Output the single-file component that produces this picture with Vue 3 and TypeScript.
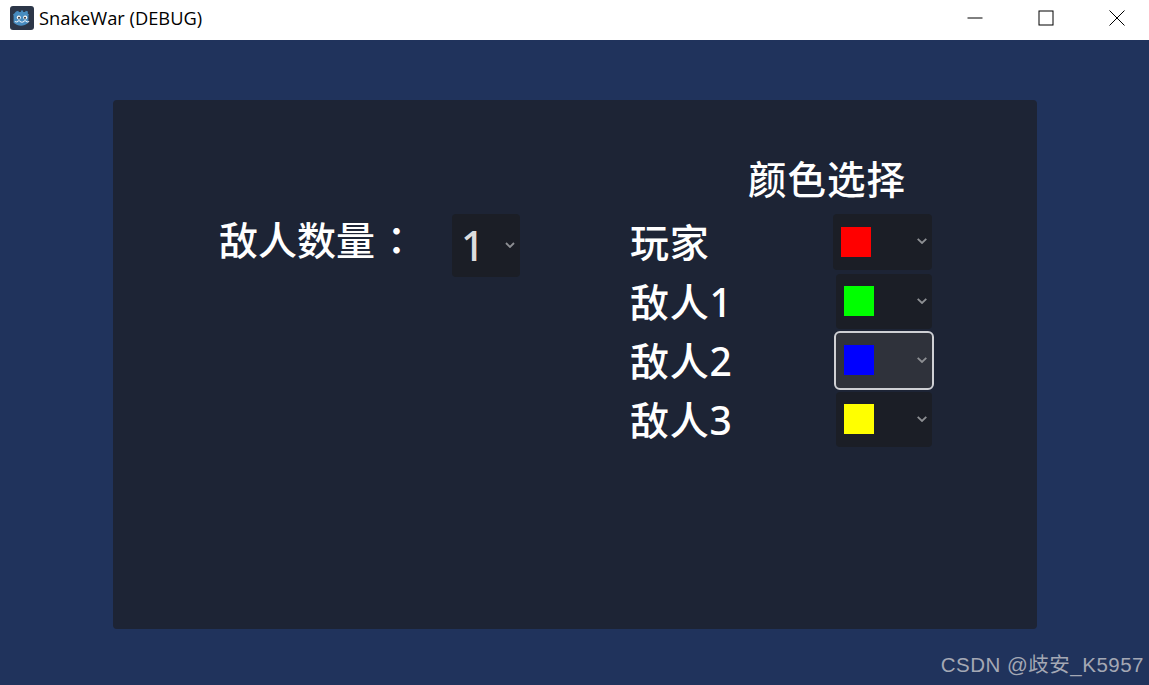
<script setup lang="ts">
interface Row { name: string; color: string; wide?: boolean; focus?: boolean }
const rows: Row[] = [
  { name: '玩家', color: '#ff0000', wide: true },
  { name: '敌人1', color: '#00ff00' },
  { name: '敌人2', color: '#0000ff', focus: true },
  { name: '敌人3', color: '#ffff00' },
]
</script>

<template>
  <div class="window">
    <header class="titlebar">
      <div class="title-left">
        <svg class="app-icon" viewBox="0 0 24 24">
          <rect width="24" height="24" rx="3" fill="#2c3648" />
          <path d="M6 5.500l2.200-.8.700 1.400c.7-.2 1.300-.2 2-.2V4.400h2.200V5.900c.7 0 1.300 0 2 .2l.7-1.400 2.200.8-.3 1.900 1.300 1.200-.6 1v7.200c-2.300 2.100-5 2.900-7.400 2.900s-5.100-.8-7.400-2.900V9.600l-.6-1 1.300-1.200z" fill="#478cbf" />
          <path d="M4.800 15.500l2.400.6.600-1.200h2.300l.6 1.200h2.600l.6-1.200h2.300l.6 1.200 2.400-.6" fill="none" stroke="#e6eef5" stroke-width="1" />
          <circle cx="8.800" cy="11.600" r="2" fill="#fff" />
          <circle cx="15.200" cy="11.600" r="2" fill="#fff" />
          <circle cx="9" cy="11.800" r="1.100" fill="#414042" />
          <circle cx="15" cy="11.800" r="1.100" fill="#414042" />
        </svg>
        <span class="title-text">SnakeWar (DEBUG)</span>
      </div>
      <div class="controls">
        <svg class="ctl" viewBox="0 0 16 16"><path d="M0.500 8H15.500" /></svg>
        <svg class="ctl" viewBox="0 0 16 16"><rect x="1" y="1" width="14" height="14" /></svg>
        <svg class="ctl" viewBox="0 0 16 16"><path d="M0.500 0.500L15.500 15.500M15.500 0.500L0.500 15.500" /></svg>
      </div>
    </header>

    <main class="stage">
      <section class="panel">
        <div class="count">
          <span class="label count-label">敌人数量<span class="colon">：</span></span>
          <div class="select count-select">
            <span class="count-value">1</span>
            <svg class="chev" viewBox="0 0 10 6"><path d="M1 1l4 4 4-4" /></svg>
          </div>
        </div>

        <div class="colors">
          <h2 class="colors-title">颜色选择</h2>
          <div class="rows">
            <div v-for="r in rows" :key="r.name" class="row">
              <span class="label row-label">{{ r.name }}</span>
              <div class="select color-select" :class="{ wide: r.wide, focus: r.focus }">
                <span class="swatch" :style="{ background: r.color }"></span>
                <svg class="chev" viewBox="0 0 10 6"><path d="M0.700 0.800l4.300 4.200 4.300-4.200" /></svg>
              </div>
            </div>
          </div>
        </div>
      </section>
      <span class="watermark">CSDN @歧安_K5957</span>
    </main>
  </div>
</template>

<style>
html, body { margin: 0; background: #20335c; }
</style>

<style scoped>
.window {
  width: 1149px;
  height: 685px;
  display: flex;
  flex-direction: column;
  overflow: hidden;
}
.titlebar {
  height: 40px;
  flex: none;
  background: #fff;
  display: flex;
  align-items: center;
  justify-content: space-between;
}
.title-left {
  display: flex;
  align-items: center;
  margin-left: 10px;
  margin-top: -5px;
}
.app-icon { width: 24px; height: 24px; display: block; }
.title-text {
  margin-left: 5px;
  font: 400 18.300px/24px "Open Sans", "Noto Sans", sans-serif;
  color: #000;
}
.controls {
  display: flex;
  gap: 55px;
  margin-right: 24px;
  margin-top: -5px;
}
.ctl { width: 16px; height: 16px; display: block; fill: none; stroke: #000; stroke-width: 1; }
.stage {
  position: relative;
  flex: 1;
  background: #20335c;
  padding: 60px 112px 56px 113px;
  display: flex;
}
.panel {
  flex: 1;
  background: #1d2435;
  border-radius: 4px;
  display: flex;
  align-items: flex-start;
  padding: 52px 0 0 106px;
  font-family: "Noto Sans", "Noto Sans CJK SC", sans-serif;
  color: #fff;
}
.label {
  font-size: 39px;
  line-height: 55px;
  font-weight: 500;
  white-space: nowrap;
}
.row-label {
  margin-left: -1px;
  margin-top: -1px;
  letter-spacing: 0.800px;
}
.count {
  display: flex;
  align-items: flex-start;
  margin-top: 62px;
  width: 412px;
}
.count-label { width: 233px; flex: none; margin-top: -3px; }
.colon { font-family: "Noto Sans CJK TC", sans-serif; padding-left: 2px; }
.select {
  background: #1b1e26;
  border-radius: 4px;
  display: flex;
  align-items: center;
  justify-content: space-between;
  box-sizing: border-box;
}
.count-select {
  width: 68px;
  height: 63px;
  padding: 0 5px 0 9px;
}
.count-value {
  font-size: 41px;
  line-height: 63px;
  color: #dcdcdd;
  font-weight: 500;
}
.chev { width: 10px; height: 6px; display: block; fill: none; stroke: #8d8f93; stroke-width: 1.800; margin-bottom: 2px; }
.colors { flex: none; width: 301px; }
.colors-title {
  margin: 0 0 8px;
  padding-left: 117px;
  font-size: 38.500px;
  line-height: 54px;
  font-weight: 500;
  letter-spacing: 1px;
  white-space: nowrap;
}
.rows { display: flex; flex-direction: column; gap: 4px; }
.row {
  display: flex;
  align-items: center;
  justify-content: space-between;
}
.color-select {
  width: 96px;
  height: 55px;
  padding: 0 5px 0 8px;
}
.color-select.wide { width: 99px; height: 56px; }
.color-select.focus {
  background: #2f323b;
  outline: 2px solid #cfd0d4;
  outline-offset: 0;
}
.swatch { width: 30px; height: 30px; display: block; margin-bottom: 1px; }
.wide .swatch { margin-bottom: 0; }
.watermark {
  position: absolute;
  right: 5px;
  bottom: 7px;
  font: 400 20.500px/26px "Liberation Sans", "Noto Sans CJK SC", sans-serif;
  color: #a4a8b4;
  letter-spacing: 0.500px;
}
</style>
